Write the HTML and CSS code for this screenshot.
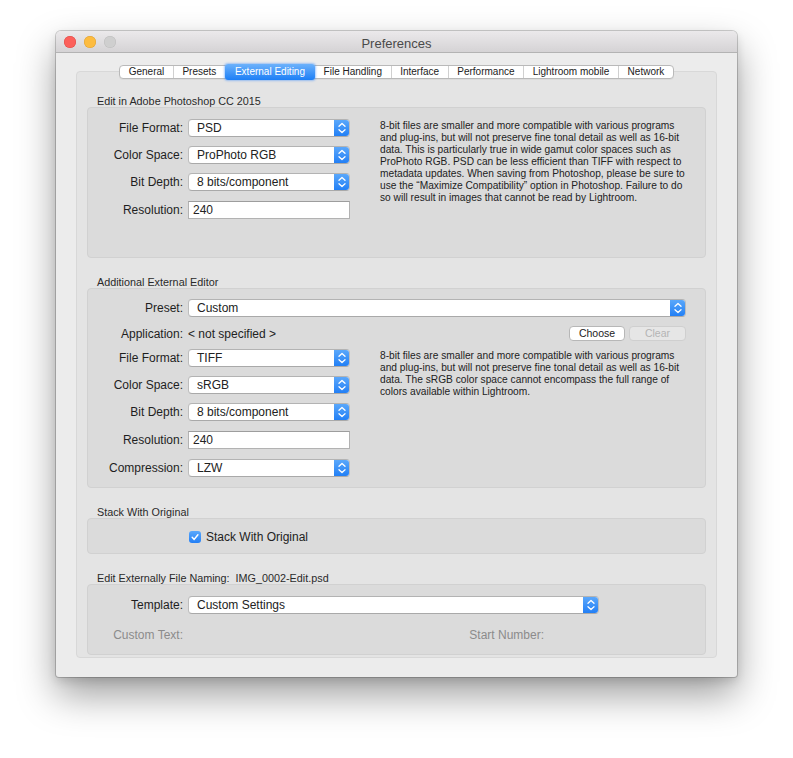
FILE: index.html
```html
<!DOCTYPE html>
<html>
<head>
<meta charset="utf-8">
<title>Preferences</title>
<link rel="stylesheet" href="styles.css">
</head>
<body>
<div class="window">
  <div class="titlebar">
    <div class="lights">
      <span class="light red"></span>
      <span class="light yellow"></span>
      <span class="light gray"></span>
    </div>
    <div class="title">Preferences</div>
    <div></div>
  </div>
  <div class="wbody">
    <div class="tabs">
      <span class="tab">General</span>
      <span class="tab">Presets</span>
      <span class="tab active">External Editing</span>
      <span class="tab">File Handling</span>
      <span class="tab">Interface</span>
      <span class="tab">Performance</span>
      <span class="tab">Lightroom mobile</span>
      <span class="tab">Network</span>
    </div>
    <div class="tabbox">
      <div class="glabel">Edit in Adobe Photoshop CC 2015</div>
      <div class="group g1">
        <div class="split">
          <div class="form">
            <span class="lbl">File Format:</span>
            <div class="popup"><span class="ptext">PSD</span><span class="arrows"><svg width="16" height="18" viewBox="0 0 16 18"><path d="M5 7.3 L8 4.5 L11 7.3 M5 10.7 L8 13.5 L11 10.7" fill="none" stroke="#fff" stroke-width="1.3" stroke-linecap="round" stroke-linejoin="round"/></svg></span></div>
            <span class="lbl">Color Space:</span>
            <div class="popup"><span class="ptext">ProPhoto RGB</span><span class="arrows"><svg width="16" height="18" viewBox="0 0 16 18"><path d="M5 7.3 L8 4.5 L11 7.3 M5 10.7 L8 13.5 L11 10.7" fill="none" stroke="#fff" stroke-width="1.3" stroke-linecap="round" stroke-linejoin="round"/></svg></span></div>
            <span class="lbl">Bit Depth:</span>
            <div class="popup"><span class="ptext">8 bits/component</span><span class="arrows"><svg width="16" height="18" viewBox="0 0 16 18"><path d="M5 7.3 L8 4.5 L11 7.3 M5 10.7 L8 13.5 L11 10.7" fill="none" stroke="#fff" stroke-width="1.3" stroke-linecap="round" stroke-linejoin="round"/></svg></span></div>
            <span class="lbl field-lbl">Resolution:</span>
            <div class="field">240</div>
          </div>
          <p class="desc">8-bit files are smaller and more compatible with various programs<br>and plug-ins, but will not preserve fine tonal detail as well as 16-bit<br>data. This is particularly true in wide gamut color spaces such as<br>ProPhoto RGB. PSD can be less efficient than TIFF with respect to<br>metadata updates. When saving from Photoshop, please be sure to<br>use the “Maximize Compatibility” option in Photoshop. Failure to do<br>so will result in images that cannot be read by Lightroom.</p>
        </div>
      </div>

      <div class="glabel gap">Additional External Editor</div>
      <div class="group g2">
        <div class="row">
          <span class="lbl">Preset:</span>
          <div class="popup wide"><span class="ptext">Custom</span><span class="arrows"><svg width="16" height="18" viewBox="0 0 16 18"><path d="M5 7.3 L8 4.5 L11 7.3 M5 10.7 L8 13.5 L11 10.7" fill="none" stroke="#fff" stroke-width="1.3" stroke-linecap="round" stroke-linejoin="round"/></svg></span></div>
        </div>
        <div class="row app">
          <span class="lbl">Application:</span>
          <span class="value">&lt; not specified &gt;</span>
          <div class="buttons">
            <span class="btn">Choose</span>
            <span class="btn disabled">Clear</span>
          </div>
        </div>
        <div class="split s2">
          <div class="form">
            <span class="lbl">File Format:</span>
            <div class="popup"><span class="ptext">TIFF</span><span class="arrows"><svg width="16" height="18" viewBox="0 0 16 18"><path d="M5 7.3 L8 4.5 L11 7.3 M5 10.7 L8 13.5 L11 10.7" fill="none" stroke="#fff" stroke-width="1.3" stroke-linecap="round" stroke-linejoin="round"/></svg></span></div>
            <span class="lbl">Color Space:</span>
            <div class="popup"><span class="ptext">sRGB</span><span class="arrows"><svg width="16" height="18" viewBox="0 0 16 18"><path d="M5 7.3 L8 4.5 L11 7.3 M5 10.7 L8 13.5 L11 10.7" fill="none" stroke="#fff" stroke-width="1.3" stroke-linecap="round" stroke-linejoin="round"/></svg></span></div>
            <span class="lbl">Bit Depth:</span>
            <div class="popup"><span class="ptext">8 bits/component</span><span class="arrows"><svg width="16" height="18" viewBox="0 0 16 18"><path d="M5 7.3 L8 4.5 L11 7.3 M5 10.7 L8 13.5 L11 10.7" fill="none" stroke="#fff" stroke-width="1.3" stroke-linecap="round" stroke-linejoin="round"/></svg></span></div>
            <span class="lbl field-lbl">Resolution:</span>
            <div class="field">240</div>
            <span class="lbl field-after">Compression:</span>
            <div class="popup field-after"><span class="ptext">LZW</span><span class="arrows"><svg width="16" height="18" viewBox="0 0 16 18"><path d="M5 7.3 L8 4.5 L11 7.3 M5 10.7 L8 13.5 L11 10.7" fill="none" stroke="#fff" stroke-width="1.3" stroke-linecap="round" stroke-linejoin="round"/></svg></span></div>
          </div>
          <p class="desc">8-bit files are smaller and more compatible with various programs<br>and plug-ins, but will not preserve fine tonal detail as well as 16-bit<br>data. The sRGB color space cannot encompass the full range of<br>colors available within Lightroom.</p>
        </div>
      </div>

      <div class="glabel gap">Stack With Original</div>
      <div class="group g3">
        <span class="check"><svg width="12" height="12" viewBox="0 0 12 12"><path d="M3.2 6.3 L5.2 8.4 L8.9 3.8" fill="none" stroke="#fff" stroke-width="1.5" stroke-linecap="round" stroke-linejoin="round"/></svg></span>
        <span class="checktext">Stack With Original</span>
      </div>

      <div class="glabel gap">Edit Externally File Naming:&nbsp; IMG_0002-Edit.psd</div>
      <div class="group g4">
        <div class="row">
          <span class="lbl">Template:</span>
          <div class="popup tmpl"><span class="ptext">Custom Settings</span><span class="arrows"><svg width="16" height="18" viewBox="0 0 16 18"><path d="M5 7.3 L8 4.5 L11 7.3 M5 10.7 L8 13.5 L11 10.7" fill="none" stroke="#fff" stroke-width="1.3" stroke-linecap="round" stroke-linejoin="round"/></svg></span></div>
        </div>
        <div class="row dimrow">
          <span class="lbl dim">Custom Text:</span>
          <span class="startnum dim">Start Number:</span>
        </div>
      </div>
    </div>
  </div>
</div>
</body>
</html>
```

FILE: styles.css
```css
* { box-sizing: border-box; }

html, body {
  margin: 0;
  padding: 0;
  background: #ffffff;
}

body {
  font-family: "Liberation Sans", Arial, Helvetica, sans-serif;
  color: #222;
  width: 793px;
  height: 758px;
  overflow: hidden;
}

.window {
  margin: 31px 0 0 56px;
  width: 681px;
  height: 646px;
  background: #ececec;
  border-radius: 5px 5px 3px 3px;
  box-shadow: 0 0 0 1px rgba(0,0,0,0.18), 0 18px 38px rgba(0,0,0,0.38), 0 4px 10px rgba(0,0,0,0.12);
  display: flex;
  flex-direction: column;
}

.titlebar {
  height: 23px;
  display: grid;
  grid-template-columns: 1fr auto 1fr;
  align-items: center;
  background: linear-gradient(#ebe9eb, #d5d3d5);
  border-bottom: 1px solid #b3b3b3;
  border-radius: 5px 5px 0 0;
}

.lights {
  display: flex;
  gap: 8px;
  padding-left: 8px;
}

.light {
  width: 12px;
  height: 12px;
  border-radius: 50%;
  display: block;
}
.light.red { background: #fc605b; box-shadow: inset 0 0 0 0.5px #de4a45; }
.light.yellow { background: #fdbc40; box-shadow: inset 0 0 0 0.5px #dea033; }
.light.gray { background: #cfcfcf; box-shadow: inset 0 0 0 0.5px #bdbdbd; }

.title {
  font-size: 13px;
  color: #4a4a4a;
  padding-top: 3px;
}

.wbody {
  flex: 1;
  padding: 10px 20px 19px 20px;
  display: flex;
  flex-direction: column;
}

.tabs {
  align-self: center;
  display: flex;
  height: 14px;
  background: #fff;
  border: 1px solid #b9b9b9;
  border-radius: 4px;
  box-shadow: 0 1px 0 rgba(0,0,0,0.04);
  position: relative;
  z-index: 1;
  margin-top: 1.5px;
  margin-bottom: -7.5px;
}

.tab {
  font-size: 10px;
  line-height: 12px;
  padding: 0 8.6px;
  color: #222;
  border-left: 1px solid #d0d0d0;
  white-space: nowrap;
}
.tab:first-child { border-left: none; }

.tab.active {
  background: linear-gradient(#6db2fb, #1d7ff6);
  color: #fff;
  border-left: none;
  margin: -2px 0;
  padding: 0 10px;
  line-height: 16px;
  border-radius: 3px;
  box-shadow: 0 0 2px 1px rgba(60,140,250,0.45);
}
.tab.active + .tab { border-left: none; }

.tabbox {
  flex: 1;
  background: #e4e4e4;
  border: 1px solid #d8d8d8;
  border-radius: 4px;
  padding: 23px 10px 2px 10px;
}

.glabel {
  font-size: 10.8px;
  line-height: 12px;
  height: 12px;
  color: #2a2a2a;
  padding-left: 10px;
  white-space: nowrap;
}
.glabel.gap { margin-top: 18px; }

.group {
  background: #dbdbdb;
  border: 1px solid #d1d1d1;
  border-radius: 4px;
}

.g1 { height: 151px; padding-top: 11px; }
.g2 { height: 200px; padding-top: 10px; padding-right: 19px; }
.g3 {
  height: 36px;
  display: flex;
  align-items: center;
  padding-left: 101px;
  padding-top: 1px;
}
.g4 { height: 71px; padding-top: 11px; }

.split {
  display: flex;
  align-items: flex-start;
}

.form {
  display: grid;
  grid-template-columns: 95px 162px;
  column-gap: 5px;
  row-gap: 9px;
  align-items: center;
}

.lbl {
  font-size: 12px;
  text-align: right;
  white-space: nowrap;
  color: #1e1e1e;
}

.popup {
  height: 18px;
  background: #fff;
  border: 1px solid #bdbdbd;
  border-top-color: #b3b3b3;
  border-bottom-color: #a9a9a9;
  border-radius: 4px;
  display: flex;
  align-items: stretch;
  overflow: hidden;
}

.ptext {
  flex: 1;
  font-size: 12px;
  line-height: 17px;
  padding-left: 8px;
  color: #222;
  white-space: nowrap;
}

.arrows {
  width: 16px;
  background: linear-gradient(#5eaafb, #1f7df5);
  display: flex;
  align-items: center;
  justify-content: center;
  margin: -1px -1px -1px 0;
  border-radius: 0 4px 4px 0;
}
.arrows svg { display: block; }

.field {
  height: 18px;
  background: #fff;
  border: 1px solid #b2b2b2;
  border-top-color: #9d9d9d;
  font-size: 12px;
  line-height: 17px;
  padding-left: 4px;
  margin-top: 1px;
}
.field-lbl { margin-top: 1px; }
.field-after { margin-top: 1px; }

.desc {
  margin: 1px 0 0 30px;
  font-size: 10.2px;
  line-height: 12px;
  color: #222;
  white-space: nowrap;
}

.row {
  display: flex;
  align-items: center;
}
.row > .lbl { width: 95px; flex: none; }
.row > .popup { margin-left: 5px; }

.popup.wide { flex: 1; }
.popup.tmpl { width: 411px; }

.row.app {
  margin-top: 9px;
  height: 15px;
}
.value {
  font-size: 12px;
  margin-left: 5px;
  white-space: nowrap;
}
.buttons {
  margin-left: auto;
  display: flex;
  gap: 4px;
}
.btn {
  font-size: 10.5px;
  line-height: 13px;
  height: 15px;
  text-align: center;
  background: #fff;
  border: 1px solid #b7b7b7;
  border-radius: 4px;
  color: #222;
  width: 56px;
}
.btn.disabled {
  width: 57px;
  background: #e6e6e6;
  border-color: #cfcfcf;
  color: #b4b4b4;
}

.s2 { margin-top: 8px; }

.check {
  width: 12px;
  height: 12px;
  border-radius: 3px;
  background: linear-gradient(#5aa8fb, #237ff5);
  display: block;
  flex: none;
}
.check svg { display: block; }
.checktext {
  font-size: 12px;
  margin-left: 5px;
}

.dimrow { margin-top: 14px; height: 14px; }
.dim { color: #8b8b8b; }
.startnum {
  font-size: 12px;
  width: 361px;
  text-align: right;
  white-space: nowrap;
}
```
